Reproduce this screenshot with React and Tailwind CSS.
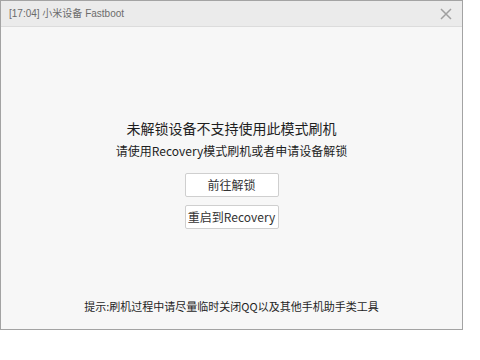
import React from 'react';

export default function App() {
    const font = { fontFamily: '"Noto Sans CJK SC", "Liberation Sans", sans-serif' };

    return (
        <div className="w-[480px] h-[360px] bg-white" style={font}>
            <div className="w-[463px] h-[330px] border border-[#a3a3a3] flex flex-col bg-[#f7f7f7]">
                {/* title bar */}
                <div className="h-[26px] shrink-0 flex items-center justify-between bg-[#ebebeb] border-b border-[#dcdcdc] pl-[8px] pr-[10px]">
                    <span className="text-[10px] text-[#6b6b6b] leading-none" style={{ fontFamily: '"Liberation Sans", "Noto Sans CJK SC", sans-serif' }}>
                        [17:04] 小米设备 Fastboot
                    </span>
                    <svg width="12" height="12" viewBox="0 0 12 12" className="text-[#a0a0a0]">
                        <path d="M1 1 L11 11 M11 1 L1 11" stroke="currentColor" strokeWidth="1.5" />
                    </svg>
                </div>

                <div className="flex-1 flex flex-col items-center pt-[91px] pb-[14px]">
                    <div className="text-[14px] leading-[20px] text-[#1e1e1e]">
                        未解锁设备不支持使用此模式刷机
                    </div>
                    <div className="mt-[4px] text-[12px] leading-[18px] text-[#1e1e1e]">
                        请使用Recovery模式刷机或者申请设备解锁
                    </div>

                    <button className="mt-[13px] w-[94px] h-[24px] bg-white border border-[#cfcfcf] rounded-[2px] text-[12px] text-[#333] flex items-center justify-center">
                        前往解锁
                    </button>
                    <button className="mt-[8px] w-[94px] h-[24px] bg-white border border-[#cfcfcf] rounded-[2px] text-[12px] text-[#333] flex items-center justify-center">
                        重启到Recovery
                    </button>

                    <div className="mt-auto text-[11px] leading-[18px] text-[#1e1e1e]">
                        提示:刷机过程中请尽量临时关闭QQ以及其他手机助手类工具
                    </div>
                </div>
            </div>
        </div>
    );
}
